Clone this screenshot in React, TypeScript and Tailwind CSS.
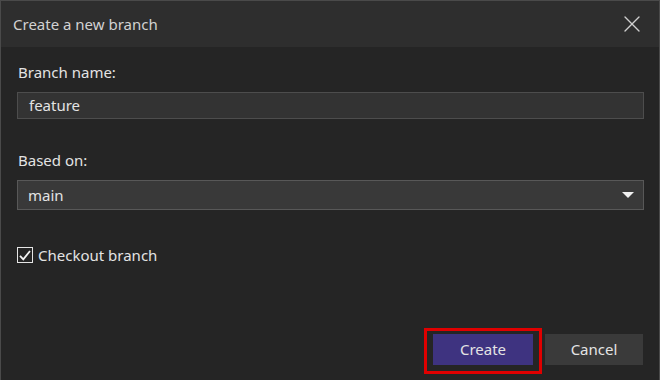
import { X } from "lucide-react";

const App = () => {
  return (
    <div
      className="w-[660px] h-[380px] bg-[#252525] border-l border-t border-r border-[#4a4a4a] flex flex-col text-[15px] text-[#e3e3e3] overflow-hidden"
      style={{ fontFamily: '"Noto Sans", "Open Sans", sans-serif' }}
    >
      <div className="h-[46px] shrink-0 bg-[#2e2e2e] flex items-center justify-between pl-[12px] pr-[13px]">
        <span className="text-[15px] text-[#d2d2d2]">Create a new branch</span>
        <X size={28} strokeWidth={1.15} className="text-[#cfcfcf]" />
      </div>
      <div className="flex-1 flex flex-col px-[16px] pt-[13px]">
        <label className="leading-[24px] pl-[1px]">Branch name:</label>
        <div className="mt-[8px] h-[27px] w-[627px] bg-[#333333] border border-[#4d4d4d] flex items-center pl-[11px] leading-none">
          feature
        </div>
        <label className="mt-[29px] leading-[24px] pl-[1px]">Based on:</label>
        <div className="mt-[8px] h-[30px] w-[627px] bg-[#393939] border border-[#585858] flex items-center justify-between pl-[10px] pr-[9px] leading-none">
          <span>main</span>
          <svg width="12" height="7" viewBox="0 0 12 7">
            <polygon points="0,0 12,0 6,6" fill="#f0f0f0" />
          </svg>
        </div>
        <div className="mt-[34px] flex items-center gap-[5px]">
          <div className="w-[16px] h-[16px] border border-[#e6e6e6] flex items-center justify-center">
            <svg width="12" height="11" viewBox="0 0 12 11">
              <path d="M1 5.8 L4.3 9.3 L11 1" stroke="#f4f4f4" strokeWidth="1.8" fill="none" />
            </svg>
          </div>
          <span>Checkout branch</span>
        </div>
        <div className="mt-auto mb-[6px] flex justify-end items-center gap-[3px]">
          <div className="border-[3px] border-[#e00000] pt-[3px] pb-[6px] px-[6px]">
            <button className="w-[100px] h-[31px] bg-[#3e3380] text-[#e4e4e4] leading-none">Create</button>
          </div>
          <button className="w-[98px] h-[31px] mb-[3px] bg-[#3a3a3a] text-[#e4e4e4] leading-none">Cancel</button>
        </div>
      </div>
    </div>
  );
};

export default App;
